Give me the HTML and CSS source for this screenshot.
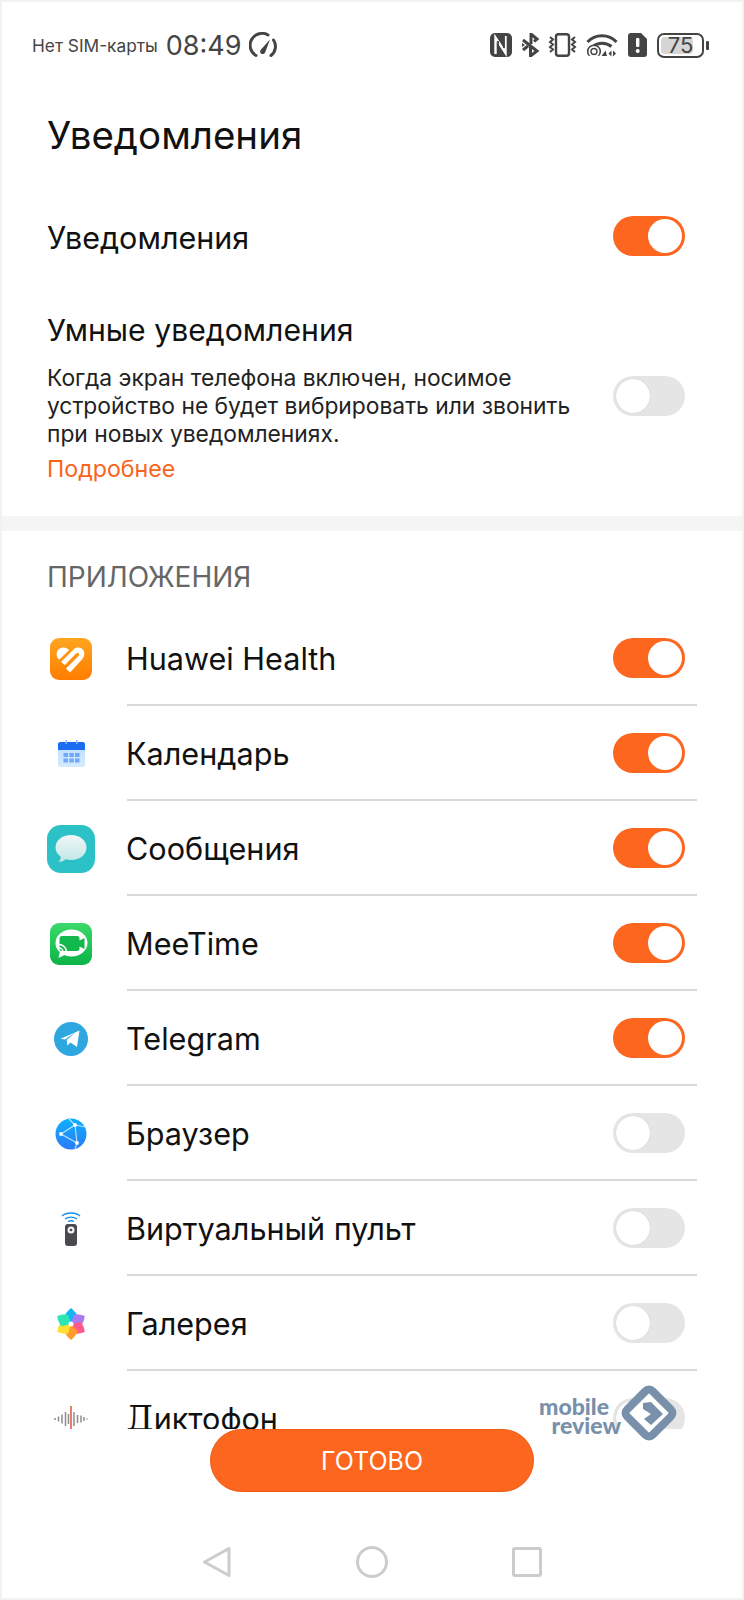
FILE: index.html
```html
<!DOCTYPE html>
<html lang="ru">
<head>
<meta charset="utf-8">
<title>Уведомления</title>
<link rel="stylesheet" href="styles.css">
</head>
<body>
<div class="screen">
  <div class="content">
    <header class="status">
      <div class="status-left">
        <span class="sim">Нет SIM-карты</span>
        <span class="clock">08:49</span>
        <svg class="st-speed" viewBox="0 0 28 26"><path d="M7 23.500A11.500 11.500 0 0 1 19 3" fill="none" stroke="#444" stroke-width="3" stroke-linecap="round"/><path d="M24.500 8A11.500 11.500 0 0 1 22 23.500" fill="none" stroke="#444" stroke-width="3" stroke-linecap="round"/><path d="M12 17.500 21 7.500l-4.800 12.700a2.600 2.600 0 1 1-4.200-2.700z" fill="#444"/></svg>
      </div>
      <div class="status-right">
        <svg class="st-nfc" viewBox="0 0 22 24"><rect width="22" height="24" rx="5" fill="#444"/><path d="M5.500 21V4.500L15.500 20V3" fill="none" stroke="#fff" stroke-width="2.400"/><path d="M8 8v14M14 2v13" stroke="#444" stroke-width="1.800"/></svg>
        <svg class="st-bt" viewBox="0 0 19 24"><path d="M2 7l14 11-6.500 5V13" fill="none" stroke="#444" stroke-width="3"/><path d="M10 11V1l6 5-3 2.500" fill="none" stroke="#444" stroke-width="3"/><path d="M2 17l5-4" stroke="#444" stroke-width="3"/><path d="M1 10l3 2-3 2z" fill="#444"/></svg>
        <svg class="st-vib" viewBox="0 0 31 24"><rect x="9" y="1.200" width="13" height="21.600" rx="2.500" fill="none" stroke="#444" stroke-width="2.400"/><path d="M3 4l3 2.500-3 2.500 3 2.500-3 2.500 3 2.500-3 2.500M28 4l-3 2.500 3 2.500-3 2.500 3 2.500-3 2.500 3 2.500" fill="none" stroke="#444" stroke-width="2"/></svg>
        <svg class="st-wifi" viewBox="0 0 32 24"><path d="M1.500 9C9 .5 23 .5 30.500 9" fill="none" stroke="#444" stroke-width="3"/><path d="M7 13.500c5-4.500 13-4.500 18.500 0" fill="none" stroke="#444" stroke-width="3"/><circle cx="8" cy="18.500" r="6.300" fill="#fff" stroke="#444" stroke-width="1.600"/><circle cx="8" cy="18.500" r="3" fill="#fff" stroke="#444" stroke-width="1.400"/><path d="M15.500 23l4-5.500 1.500 5.500zM25.500 17.500v6l-3-3zM27 17.500v6l3-3z" fill="#444"/><rect x="0" y="22.800" width="16" height="1.200" fill="#fff"/></svg>
        <svg class="st-sim" viewBox="0 0 19 24"><path d="M3 0h10l6 6v15a3 3 0 0 1-3 3H3a3 3 0 0 1-3-3V3a3 3 0 0 1 3-3z" fill="#444"/><rect x="8" y="5" width="3.400" height="9" rx="1" fill="#fff"/><circle cx="9.700" cy="18" r="2" fill="#fff"/></svg>
        <div class="battery"><span class="battery-fill"></span><span class="battery-num">75</span></div>
        <span class="battery-nub"></span>
      </div>
    </header>

    <h1 class="title">Уведомления</h1>

    <div class="main-row">
      <span class="main-label">Уведомления</span>
      <span class="toggle on"></span>
    </div>

    <div class="smart">
      <div class="smart-text">
        <div class="smart-title">Умные уведомления</div>
        <p class="smart-desc">Когда экран телефона включен, носимое устройство не будет вибрировать или звонить при новых уведомлениях.</p>
        <a class="more">Подробнее</a>
      </div>
      <span class="toggle smart-toggle"></span>
    </div>

    <div class="divider"></div>

    <div class="section-head">ПРИЛОЖЕНИЯ</div>

    <ul class="apps">
      <li class="app">
        <span class="app-icon"><svg width="42" height="42" viewBox="0 0 42 42"><defs><linearGradient id="hh" x1="0" y1="0" x2="0" y2="1"><stop offset="0" stop-color="#ffa51f"/><stop offset="1" stop-color="#ff7d00"/></linearGradient></defs><rect width="42" height="42" rx="9" fill="url(#hh)"/><path d="M8 21C5 16 7 10 13 9.500c2.500-.2 4.500.8 6 2.500L9.500 21.500z" fill="#fff"/><path d="M11 24 23.500 11.500c3-3 9-2.500 10.500 2 1 3-.2 6-2 8L20 34.500l-4-4 13-13c1-1.500-1-3.500-2.500-2.500L15 27z" fill="#fff"/></svg></span>
        <div class="app-body"><span class="app-name">Huawei Health</span><span class="toggle on"></span></div>
      </li>
      <li class="app">
        <span class="app-icon"><svg width="27" height="27" viewBox="0 0 27 27"><defs><linearGradient id="cal" x1="0" y1="0" x2="0" y2="1"><stop offset="0" stop-color="#b8dcff"/><stop offset="1" stop-color="#d4ebff"/></linearGradient></defs><rect y="2" width="27" height="25" rx="2.500" fill="url(#cal)"/><path d="M0 10V4.500A2.500 2.500 0 0 1 2.500 2h22A2.500 2.500 0 0 1 27 4.500V10z" fill="#1a6cf0"/><rect x="7.500" y="0" width="1.500" height="4" fill="#8ab8f5"/><rect x="18" y="0" width="1.500" height="4" fill="#8ab8f5"/><g fill="#6fa9f7"><rect x="5.500" y="13" width="4.500" height="4"/><rect x="11.300" y="13" width="4.500" height="4"/><rect x="17" y="13" width="4.500" height="4"/><rect x="5.500" y="18.500" width="4.500" height="4"/><rect x="11.300" y="18.500" width="4.500" height="4"/><rect x="17" y="18.500" width="4.500" height="4"/></g></svg></span>
        <div class="app-body"><span class="app-name">Календарь</span><span class="toggle on"></span></div>
      </li>
      <li class="app">
        <span class="app-icon"><svg width="48" height="48" viewBox="0 0 48 48"><defs><linearGradient id="msg" x1="0" y1="0" x2="0" y2="1"><stop offset="0" stop-color="#f2f7f7"/><stop offset="1" stop-color="#bfe6e6"/></linearGradient></defs><rect width="48" height="48" rx="14" fill="#2cc1c7"/><path d="M24 10c9 0 15.500 5.500 15.500 12.500S33 35 24 35c-2 0-3.800-.2-5.500-.7-1.800 1.800-4 2.700-7 2.700 1.500-1.500 2.200-3.200 2.300-5.300C10.500 29.500 8.500 26.200 8.500 22.500 8.500 15.500 15 10 24 10z" fill="url(#msg)"/></svg></span>
        <div class="app-body"><span class="app-name">Сообщения</span><span class="toggle on"></span></div>
      </li>
      <li class="app">
        <span class="app-icon"><svg width="42" height="42" viewBox="0 0 42 42"><defs><linearGradient id="mt" x1="0" y1="0" x2="0" y2="1"><stop offset="0" stop-color="#3bd96a"/><stop offset="1" stop-color="#0cb347"/></linearGradient></defs><rect width="42" height="42" rx="9" fill="url(#mt)"/><ellipse cx="21.500" cy="20" rx="16" ry="13.500" fill="#fff"/><path d="M10 28l-1.500 7 8-4z" fill="#fff"/><path d="M12 13h15a2.500 2.500 0 0 1 2.500 2.500v2l5-2.500v11l-5-2.500v2a2.500 2.500 0 0 1-2.500 2.500H12a2.500 2.500 0 0 1-2.500-2.500v-10A2.500 2.500 0 0 1 12 13z" fill="#12b84c"/><path d="M9 21.500a7.500 7.500 0 0 1 7.500 7.500M9 25a4 4 0 0 1 4 4" fill="none" stroke="#fff" stroke-width="1.500"/></svg></span>
        <div class="app-body"><span class="app-name">MeeTime</span><span class="toggle on"></span></div>
      </li>
      <li class="app">
        <span class="app-icon"><svg width="34" height="34" viewBox="0 0 34 34"><circle cx="17" cy="17" r="17" fill="#2ea6df"/><path d="M6.500 16.800 25.500 8.500 23 25l-6.500-4.500-3.200 3-.6-5.600 9-7.800L11 17.500z" fill="#fff"/></svg></span>
        <div class="app-body"><span class="app-name">Telegram</span><span class="toggle on"></span></div>
      </li>
      <li class="app">
        <span class="app-icon"><svg width="32" height="32" viewBox="0 0 32 32"><defs><linearGradient id="br" x1="0" y1="0" x2="0" y2="1"><stop offset="0" stop-color="#0fb0ff"/><stop offset="1" stop-color="#2a7bf6"/></linearGradient></defs><circle cx="16" cy="16" r="15.500" fill="url(#br)"/><path d="M6 16 20 7l2 18zM6 16l16 9M20 7l-6-6M22 25l-2 6M20 7l11 2" fill="none" stroke="#bfe6ff" stroke-width="1.100"/><circle cx="6" cy="16" r="1.900" fill="#fff"/><circle cx="20" cy="7" r="1.900" fill="#fff"/><circle cx="22" cy="25" r="1.900" fill="#fff"/></svg></span>
        <div class="app-body"><span class="app-name">Браузер</span><span class="toggle"></span></div>
      </li>
      <li class="app">
        <span class="app-icon"><svg width="20" height="35" viewBox="0 0 20 35"><path d="M1 5C5.500 1 14.500 1 19 5M4 8c3.500-2.500 8.500-2.500 12 0M7 10.500c2-1 4-1 6 0" fill="none" stroke="#1a8cf5" stroke-width="1.300"/><rect x="4" y="13" width="12" height="22" rx="3" fill="#4a4a4e"/><circle cx="10" cy="19" r="3.500" fill="#f2f2f2"/><circle cx="10" cy="19" r="1.300" fill="#4a4a4e"/></svg></span>
        <div class="app-body"><span class="app-name">Виртуальный пульт</span><span class="toggle"></span></div>
      </li>
      <li class="app">
        <span class="app-icon"><svg width="34" height="34" viewBox="0 0 34 34"><g transform="translate(1 1)"><path d="M16 16 9.500 9Q10 5 16 0 22 5 22.500 9z" fill="#14b4f5"/><path d="M16 16 9.500 9Q10 5 16 0 22 5 22.500 9z" fill="#a87bf5" transform="rotate(60 16 16)"/><path d="M16 16 9.500 9Q10 5 16 0 22 5 22.500 9z" fill="#ff5a8c" transform="rotate(120 16 16)"/><path d="M16 16 9.500 9Q10 5 16 0 22 5 22.500 9z" fill="#ff9a2e" transform="rotate(180 16 16)"/><path d="M16 16 9.500 9Q10 5 16 0 22 5 22.500 9z" fill="#ffdf33" transform="rotate(240 16 16)"/><path d="M16 16 9.500 9Q10 5 16 0 22 5 22.500 9z" fill="#2ee6b4" transform="rotate(300 16 16)"/><circle cx="16" cy="16" r="2.500" fill="#fff"/></g></svg></span>
        <div class="app-body"><span class="app-name">Галерея</span><span class="toggle"></span></div>
      </li>
      <li class="app">
        <span class="app-icon"><svg width="34" height="26" viewBox="0 0 34 26"><g stroke="#8a8d93" stroke-width="1.500"><path d="M1 12v2M4.500 10.500v5M8 8.500v9M11.500 6v14M14.500 8v10M20 6v14M23.500 9v8M27 9.500v7M30 11v4M33 12.500v1"/></g><path d="M17 0v26M15.500 25.500h3" stroke="#e8503a" stroke-width="1.500"/></svg></span>
        <div class="app-body"><span class="app-name"><span class="serif-d">Д</span>иктофон</span><span class="toggle"></span></div>
      </li>
    </ul>
  </div>

  <footer class="footer">
    <button class="done">ГОТОВО</button>
    <nav class="navbar">
      <svg class="nav-icon" width="30" height="32" viewBox="0 0 30 32"><path d="M27 2.500v27L2.500 16z" fill="none" stroke="#ccc" stroke-width="3" stroke-linejoin="round"/></svg>
      <svg class="nav-icon" width="32" height="32" viewBox="0 0 32 32"><circle cx="16" cy="16" r="14.500" fill="none" stroke="#ccc" stroke-width="3"/></svg>
      <svg class="nav-icon" width="30" height="30" viewBox="0 0 30 30"><rect x="1.500" y="1.500" width="27" height="27" rx="1.500" fill="none" stroke="#ccc" stroke-width="3"/></svg>
    </nav>
  </footer>

  <div class="watermark">
    <span class="wm-text"><span class="wm-line1">mobile</span>review</span>
    <svg width="56" height="56" viewBox="0 0 56 56"><rect x="10" y="10" width="36" height="36" rx="5" transform="rotate(45 28 28)" fill="#fff" stroke="#7890aa" stroke-width="8"/><path d="M22 18l8-1 12 12-12 11-7-6 7-5-8-5z" fill="#7890aa"/></svg>
  </div>
</div>
</body>
</html>
```

FILE: styles.css
```css
* { box-sizing: border-box; }
html, body { margin: 0; padding: 0; }
body {
  background: #f2f2f2;
  font-family: Inter, "Noto Sans", "Liberation Sans", sans-serif;
  color: #111;
}
.screen {
  position: relative;
  width: 740px;
  height: 1596px;
  margin: 2px;
  background: #fff;
  display: flex;
  flex-direction: column;
  overflow: hidden;
}
.content { height: 1427px; overflow: hidden; flex: none; }

.status {
  height: 86px;
  padding: 0 33px 0 30px;
  display: flex;
  align-items: center;
  justify-content: space-between;
  color: #444;
}
.status-left, .status-right { display: flex; align-items: center; }
.sim { font-size: 17.3px; }
.clock { font-size: 27px; margin-left: 8px; }
.st-speed { width: 28px; height: 26px; margin-left: 7px; }
.st-nfc { width: 22px; height: 24px; }
.st-bt { width: 19px; height: 24px; margin-left: 9px; }
.st-vib { width: 31px; height: 24px; margin-left: 7px; }
.st-wifi { width: 32px; height: 24px; margin-left: 8px; }
.st-sim { width: 19px; height: 24px; margin-left: 10px; }
.battery {
  position: relative;
  width: 47px;
  height: 25px;
  margin-left: 10px;
  border: 2px solid #444;
  border-radius: 7px;
  overflow: hidden;
  text-align: center;
}
.battery-fill {
  position: absolute;
  left: 2px; top: 2px; bottom: 2px;
  width: 75%;
  background: #d6d6d6;
  border-radius: 4px;
}
.battery-num { position: relative; font-size: 22px; line-height: 21px; display: block; }
.battery-nub { width: 3px; height: 9px; margin-left: 2px; background: #444; border-radius: 1px; }

.title {
  margin: 0;
  padding-left: 45px;
  height: 94px;
  line-height: 94px;
  font-size: 38.5px;
  font-weight: 400;
}
.main-row {
  height: 108px;
  padding: 2px 57px 0 45px;
  display: flex;
  align-items: center;
  justify-content: space-between;
}
.main-row .toggle { margin-top: -2px; }
.main-label { font-size: 30.5px; }
.smart-title { font-size: 30.2px; }

.smart {
  padding: 21px 57px 30px 45px;
  display: flex;
  justify-content: space-between;
}
.smart-text { width: 531px; }
.smart-title { line-height: 38px; height: 53px; }
.smart-desc { margin: 0; font-size: 22.8px; line-height: 28px; color: #222; }
.more { display: block; margin-top: 4px; font-size: 23.2px; line-height: 34px; color: #f9641c; }
.smart-toggle { margin-top: 65px; }

.toggle {
  position: relative;
  display: block;
  flex: none;
  width: 72px;
  height: 40px;
  border-radius: 20px;
  background: #e5e5e5;
}
.toggle::after {
  content: "";
  position: absolute;
  top: 3px;
  left: 3px;
  width: 34px;
  height: 34px;
  border-radius: 50%;
  background: #fff;
  box-shadow: 0 0 1px #bbb;
}
.toggle.on { background: #fd661f; }
.toggle.on::after { left: 35px; box-shadow: none; }

.divider { height: 15px; background: #f5f5f5; }

.section-head {
  padding: 30px 45px 18px;
  font-size: 28px;
  line-height: 32px;
  color: #666;
}

.apps { list-style: none; margin: 0; padding: 0; }
.app { height: 95px; display: flex; align-items: stretch; }
.app-icon {
  width: 125px;
  padding-left: 13px;
  display: flex;
  align-items: center;
  justify-content: center;
  flex: none;
}
.app-body {
  flex: 1;
  margin-right: 45px;
  padding-right: 12px;
  border-bottom: 2px solid #d9d9d9;
  display: flex;
  align-items: center;
  justify-content: space-between;
}
.app-name { font-size: 30.6px; margin-left: -1px; padding-top: 2px; }
.serif-d { font-family: "DejaVu Serif", serif; font-size: 34px; line-height: 1; }

.footer {
  flex: 1;
  display: flex;
  flex-direction: column;
  align-items: center;
}
.done {
  width: 324px;
  height: 63px;
  border: 1px solid #f25a14;
  border-radius: 32px;
  background: #fd661f;
  color: #fff;
  font-family: inherit;
  font-size: 25px;
  padding-top: 2px;
}
.navbar {
  margin-top: 54px;
  width: 340px;
  display: flex;
  align-items: center;
  justify-content: space-between;
}

.watermark {
  position: absolute;
  left: 537px;
  top: 1383px;
  display: flex;
  align-items: center;
}
.wm-text {
  display: block;
  width: 82px;
  padding-top: 6px;
  font-family: Lato, sans-serif;
  font-weight: 900;
  font-size: 23px;
  line-height: 19px;
  color: #7890aa;
  text-align: right;
}
.wm-line1 { display: block; padding-right: 12px; }
```
